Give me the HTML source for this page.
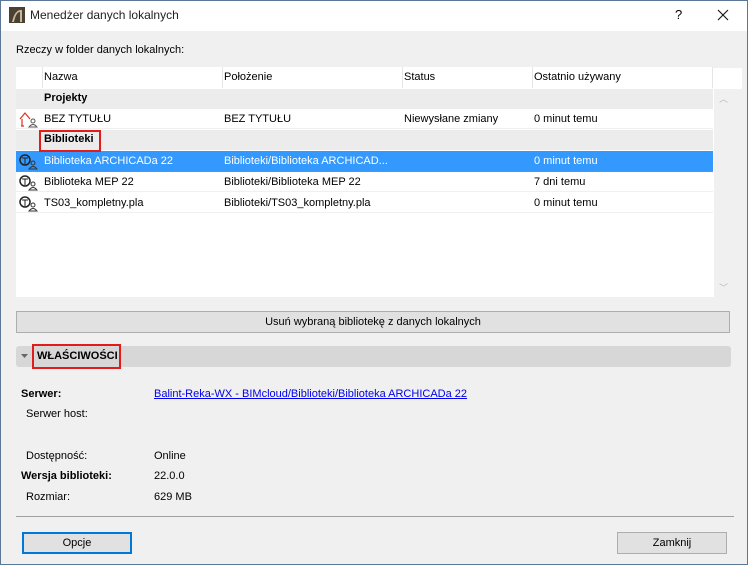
<!DOCTYPE html>
<html><head><meta charset="utf-8"><style>
*{box-sizing:border-box;margin:0;padding:0}
body{width:748px;height:565px;overflow:hidden;font-family:"Liberation Sans","DejaVu Sans",sans-serif;font-size:11px;color:#000;background:#f0f0f0;position:relative}
.frame{position:absolute;left:0;top:0;width:748px;height:565px;border:1px solid #5a7896;z-index:5}
.tb{position:absolute;left:0;top:0;width:748px;height:31px;background:#fff}
.a{position:absolute;white-space:nowrap}
.tbl{position:absolute;left:16px;top:68px;width:726px;height:229px;background:#fff}
.row{position:absolute;left:0;width:697px;height:20px;line-height:20px}
.row span{position:absolute;white-space:nowrap}
.grp{background:#ececec;font-weight:bold}
.sel{background:#3399ff;color:#fff;border-bottom:1px dotted #c77}
.sep{border-bottom:1px solid #f0f0f0}
.btn{position:absolute;background:#e1e1e1;border:1px solid #adadad;text-align:center;display:flex;align-items:center;justify-content:center}
</style></head><body>
<div class="frame"></div>
<div class="tb">
<svg class="a" style="left:9px;top:7px" width="16" height="16"><rect width="16" height="16" fill="#4a4034"/><path d="M3 15 Q6 2 13 3 L13 15 L11 15 L11 5 Q7 5 5 15Z" fill="#c8b89a"/></svg>
<div class="a" style="left:30px;top:8px;font-size:12px;color:#222">Menedżer danych lokalnych</div>
<div class="a" style="left:675px;top:7px;font-size:13px">?</div>
<svg class="a" style="left:717px;top:9px" width="12" height="12"><path d="M1 1L11 11M11 1L1 11" stroke="#111" stroke-width="1.1"/></svg>
</div>
<div class="a" style="left:16px;top:44px">Rzeczy w folder danych lokalnych:</div>
<div class="tbl">
 <div class="row" style="top:-1px;height:21px;width:697px;background:#fff">
  <span style="left:26px;top:0;height:21px;border-left:1px solid #e5e5e5"></span>
  <span style="left:28px">Nazwa</span>
  <span style="left:206px;height:21px;border-left:1px solid #e5e5e5"></span><span style="left:208px">Położenie</span>
  <span style="left:386px;height:21px;border-left:1px solid #e5e5e5"></span><span style="left:388px">Status</span>
  <span style="left:516px;height:21px;border-left:1px solid #e5e5e5"></span><span style="left:518px">Ostatnio używany</span>
  <span style="left:696px;height:21px;border-left:1px solid #e5e5e5"></span>
 </div>
 <div class="row grp" style="top:21px"><span style="left:28px;top:-1px">Projekty</span></div>
 <div class="row sep" style="top:41px"><svg style="position:absolute;left:2px;top:2px" width="20" height="17"><path d="M2 8L7 2L12 8M4 8V15M3 15H6" stroke="#e03020" fill="none" stroke-width="1.2"/><circle cx="15" cy="10" r="2" fill="none" stroke="#555"/><path d="M11 16Q15 11 19 16Z" fill="none" stroke="#555"/></svg><span style="left:28px">BEZ TYTUŁU</span><span style="left:208px">BEZ TYTUŁU</span><span style="left:388px">Niewysłane zmiany</span><span style="left:518px">0 minut temu</span></div>
 <div class="row grp" style="top:62px"><span style="left:28px;top:-1px">Biblioteki</span></div>
 <div class="row sel" style="top:83px;height:21px"><svg style="position:absolute;left:2px;top:2px" width="20" height="17"><circle cx="7" cy="7" r="5" fill="none" stroke="#222" stroke-width="1.5"/><path d="M4 5H10M7 5V11" stroke="#222"/><circle cx="15" cy="10" r="2" fill="none" stroke="#333"/><path d="M11 16Q15 11 19 16Z" fill="none" stroke="#333"/></svg><span style="left:28px">Biblioteka ARCHICADa 22</span><span style="left:208px">Biblioteki/Biblioteka ARCHICAD...</span><span style="left:518px">0 minut temu</span></div>
 <div class="row sep" style="top:104px"><svg style="position:absolute;left:2px;top:2px" width="20" height="17"><circle cx="7" cy="7" r="5" fill="none" stroke="#222" stroke-width="1.5"/><path d="M4 5H10M7 5V11" stroke="#222"/><circle cx="15" cy="10" r="2" fill="none" stroke="#333"/><path d="M11 16Q15 11 19 16Z" fill="none" stroke="#333"/></svg><span style="left:28px">Biblioteka MEP 22</span><span style="left:208px">Biblioteki/Biblioteka MEP 22</span><span style="left:518px">7 dni temu</span></div>
 <div class="row sep" style="top:125px"><svg style="position:absolute;left:2px;top:2px" width="20" height="17"><circle cx="7" cy="7" r="5" fill="none" stroke="#222" stroke-width="1.5"/><path d="M4 5H10M7 5V11" stroke="#222"/><circle cx="15" cy="10" r="2" fill="none" stroke="#333"/><path d="M11 16Q15 11 19 16Z" fill="none" stroke="#333"/></svg><span style="left:28px">TS03_kompletny.pla</span><span style="left:208px">Biblioteki/TS03_kompletny.pla</span><span style="left:518px">0 minut temu</span></div>
 <div style="position:absolute;left:698px;top:21px;width:28px;height:208px;background:#f0f0f0"></div>
 <div class="a" style="left:703px;top:24px;color:#bbb;font-size:9px">︿</div>
 <div class="a" style="left:703px;top:213px;color:#bbb;font-size:9px">﹀</div>
</div>
<div class="a" style="left:39px;top:130px;width:62px;height:22px;border:2px solid #e21b1b"></div>
<div class="btn" style="left:16px;top:311px;width:714px;height:22px">Usuń wybraną bibliotekę z danych lokalnych</div>
<div class="a" style="left:16px;top:346px;width:715px;height:21px;background:#d7d7d7;border-radius:3px"></div>
<svg class="a" style="left:21px;top:354px" width="8" height="6"><path d="M0 0H7L3.5 4Z" fill="#666"/></svg>
<div class="a" style="left:32px;top:344px;width:89px;height:25px;border:2px solid #e21b1b;font-weight:bold;line-height:21px;padding-left:3px">WŁAŚCIWOŚCI</div>
<div class="a" style="left:21px;top:388px;font-weight:bold">Serwer:</div>
<div class="a" style="left:154px;top:388px;color:#0000ee;text-decoration:underline">Balint-Reka-WX - BIMcloud/Biblioteki/Biblioteka ARCHICADa 22</div>
<div class="a" style="left:26px;top:408px">Serwer host:</div>
<div class="a" style="left:26px;top:450px">Dostępność:</div><div class="a" style="left:154px;top:450px">Online</div>
<div class="a" style="left:21px;top:470px;font-weight:bold">Wersja biblioteki:</div><div class="a" style="left:154px;top:470px">22.0.0</div>
<div class="a" style="left:26px;top:491px">Rozmiar:</div><div class="a" style="left:154px;top:491px">629 MB</div>
<div class="a" style="left:16px;top:516px;width:718px;height:1px;background:#a0a0a0"></div>
<div class="btn" style="left:22px;top:532px;width:110px;height:22px;border:2px solid #0078d7">Opcje</div>
<div class="btn" style="left:617px;top:532px;width:110px;height:22px">Zamknij</div>
</body></html>
